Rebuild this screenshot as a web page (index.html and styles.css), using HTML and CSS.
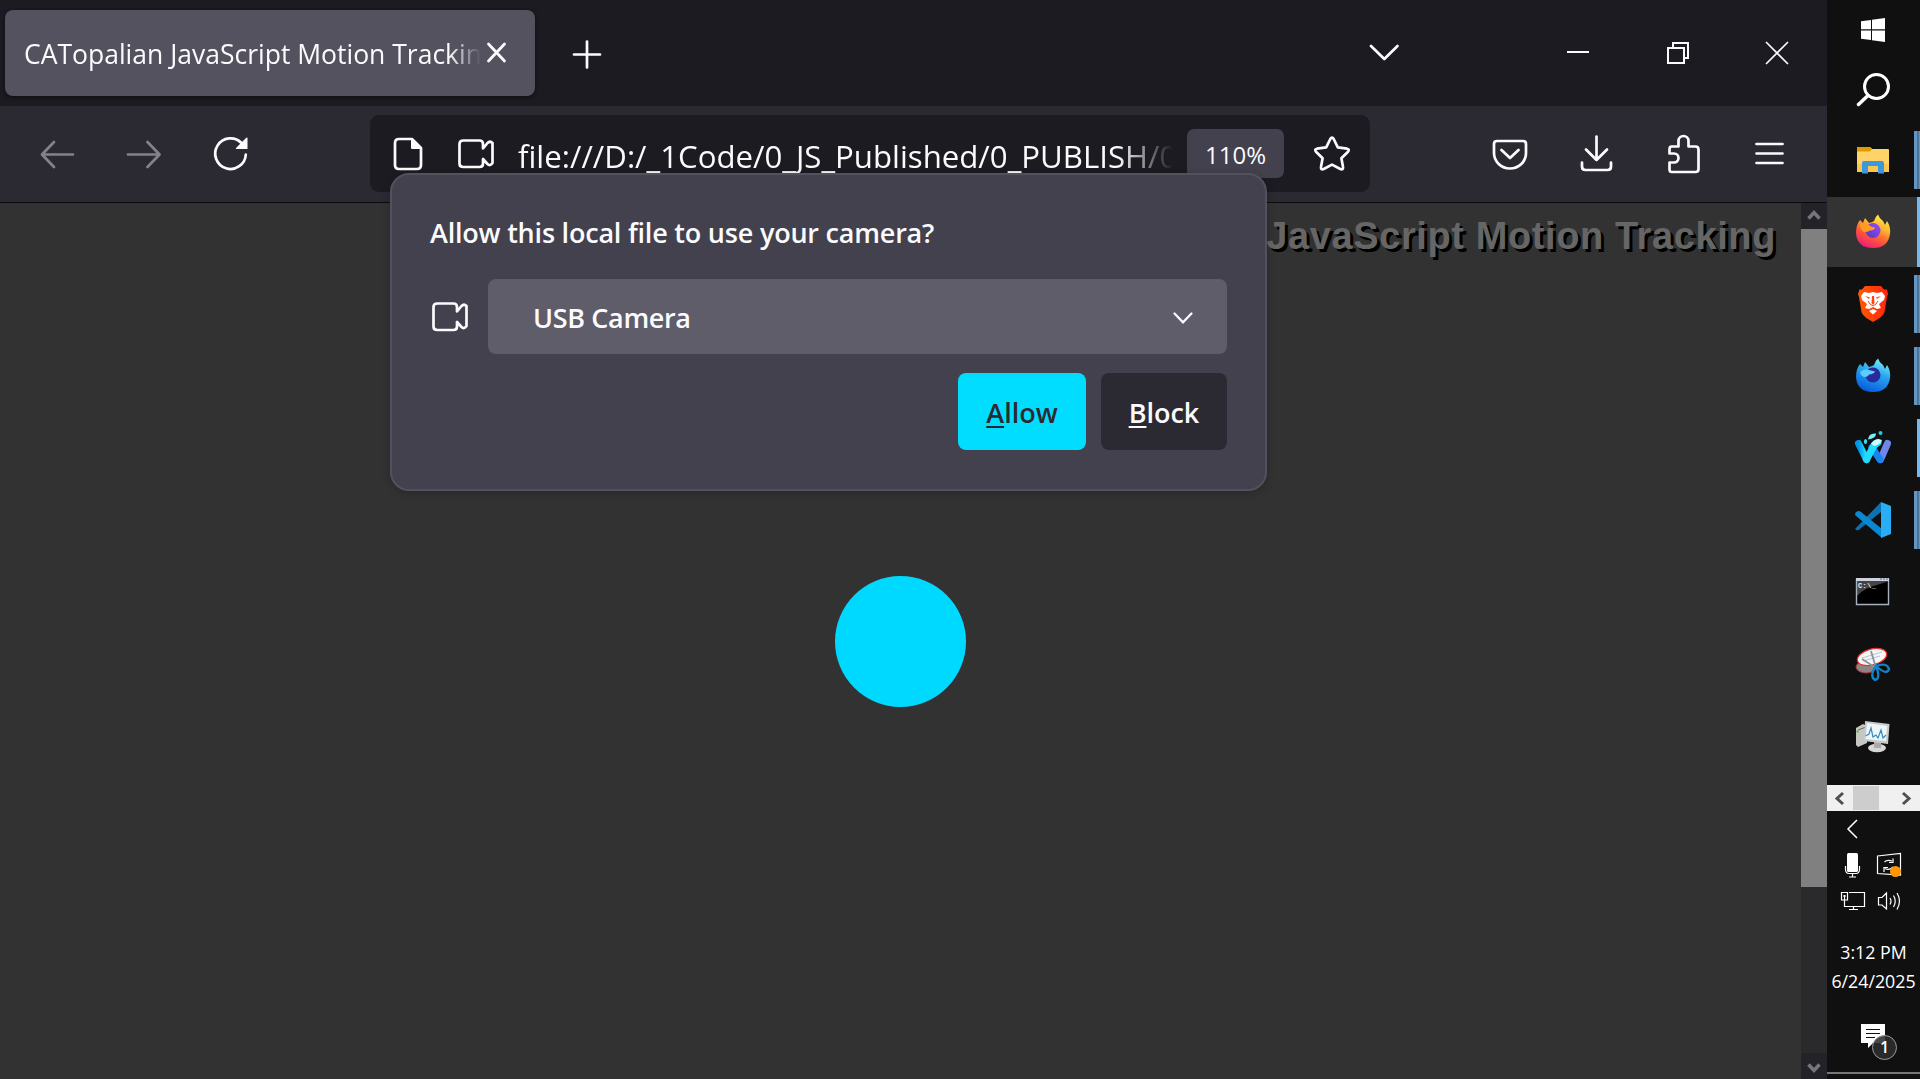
FILE: index.html
```html
<!DOCTYPE html>
<html lang="en">
<head>
<meta charset="utf-8">
<title>CATopalian JavaScript Motion Tracking</title>
<link rel="stylesheet" href="styles.css">
</head>
<body>
<div class="desktop">
  <main class="window">
    <header class="tabstrip">
      <div class="tab">
        <span class="tab-title">CATopalian JavaScript Motion Tracking</span>
        <svg class="tab-close" viewBox="0 0 24 24"><path d="M3.500 3 19.500 20M19.500 3 3.500 20" fill="none" stroke="#fbfbfe" stroke-width="2.800" stroke-linecap="round"/></svg>
      </div>
      <svg class="icon new-tab" viewBox="0 0 48 48"><path d="M11 25.500H37M24 12.500V38.500" class="line"/></svg>
      <svg class="icon all-tabs" viewBox="0 0 48 48"><path d="M11 17 24.300 30 37.500 17" class="line"/></svg>
      <div class="window-buttons">
        <svg class="icon" viewBox="0 0 48 48"><path d="M13 23H35" class="line square"/></svg>
        <svg class="icon" viewBox="0 0 48 48"><path d="M15 19H31V34H15ZM20 18V14H35V29H32" class="line square"/></svg>
        <svg class="icon" viewBox="0 0 48 48"><path d="M14.500 13.500 35.500 34.500M35.500 13.500 14.500 34.500" class="line thin"/></svg>
      </div>
    </header>
    <nav class="toolbar">
      <svg class="icon dim" viewBox="0 0 48 48"><path d="M40 24.500H9.500M21 12 9 24.500 21 37" class="line"/></svg>
      <svg class="icon dim" viewBox="0 0 48 48"><path d="M8 24.500H39M27.500 12 39.500 24.500 27.500 37" class="line"/></svg>
      <svg class="icon" viewBox="0 0 48 48"><path d="M38.800 24.500A15.300 15.300 0 1 1 34.500 13" class="line"/><path d="M40.500 8.500V19H30Q28 19 29.500 17.500L38.500 8.500Q40.500 6.500 40.500 8.500Z" fill="#fbfbfe"/></svg>
      <div class="urlbar">
        <svg class="icon" viewBox="0 0 48 48"><path d="M15 9H28L37 18V35Q37 39 33 39H15Q11 39 11 35V13Q11 9 15 9Z" class="line"/><path d="M27 8.500V18Q27 19 28 19H37.500Z" fill="#fbfbfe"/></svg>
        <svg class="icon" viewBox="0 0 48 48"><path d="M11.300 10.500H27.500Q31 10.500 31 14V18.500L35.500 13Q38 10.500 40.500 13V33Q38 36.500 35.500 34L31 29V33.500Q31 37 27.500 37H11.300Q7.500 37 7.500 33.500V14Q7.500 10.500 11.300 10.500Z" class="line"/></svg>
        <span class="url">file:///D:/_1Code/0_JS_Published/0_PUBLISH/0</span>
        <span class="zoom">110%</span>
        <svg class="icon" viewBox="0 0 48 48"><path d="M22.300 9Q24 6 25.700 9L29.800 17.300 39 18.700Q42 19.400 40 21.700L33.400 28.200 35 37Q35.300 40.300 32.300 39L24 34.600 15.700 39Q12.700 40.300 13 37L14.600 28.200 8 21.700Q6 19.400 9 18.700L18.200 17.300Z" class="line"/></svg>
      </div>
      <div class="tools">
        <svg class="icon" viewBox="0 0 48 48"><path d="M11 11H37Q40 11 40 14V23A16 15.500 0 0 1 8 23V14Q8 11 11 11ZM15.500 20 24 28 32.500 20" class="line"/></svg>
        <svg class="icon" viewBox="0 0 48 48"><path d="M23.500 6.500V30M13 19.500 23.500 30 34 19.500M9 32.500V36.500Q9 40 12.500 40H34.500Q38 40 38 36.500V32.500" class="line"/></svg>
        <svg class="icon" viewBox="0 0 48 48"><path d="M12.500 16.500H19.500V11A5 5 0 0 1 29.500 11V16.500H36.500Q39.500 16.500 39.500 19.500V39Q39.500 42 36.500 42H12.500Q10.500 42 10.500 39V32.500H15A4.500 4.500 0 0 0 15 23.500H10.500V19.500Q10.500 16.500 12.500 16.500Z" class="line"/></svg>
        <svg class="icon" viewBox="0 0 48 48"><path d="M10.500 14H36.500M10.500 23.500H36.500M10.500 33H36.500" class="line"/></svg>
      </div>
    </nav>
    <section class="viewport">
      <div class="page">
        <h1 class="page-title">JavaScript Motion Tracking</h1>
        <div class="ball"></div>
      </div>
      <div class="scrollbar">
        <svg viewBox="0 0 26 26"><path d="M7.500 15.500 13 9.500 18.500 15.500" fill="none" stroke="#77777a" stroke-width="3.500"/></svg>
        <div class="thumb"></div>
        <svg class="down" viewBox="0 0 26 26"><path d="M7.500 11.500 13 17.500 18.500 11.500" fill="none" stroke="#77777a" stroke-width="3.500"/></svg>
      </div>
    </section>
    <div class="popup">
      <p class="question">Allow this local file to use your camera?</p>
      <div class="device">
        <svg class="icon" viewBox="0 0 48 48"><path d="M11.300 10.500H27.500Q31 10.500 31 14V18.500L35.500 13Q38 10.500 40.500 13V33Q38 36.500 35.500 34L31 29V33.500Q31 37 27.500 37H11.300Q7.500 37 7.500 33.500V14Q7.500 10.500 11.300 10.500Z" class="line"/></svg>
        <div class="select"><span>USB Camera</span><svg viewBox="0 0 24 24"><path d="M3.500 8.500 12 17.300 20.500 8.500" fill="none" stroke="#fbfbfe" stroke-width="2.300" stroke-linecap="round"/></svg></div>
      </div>
      <div class="actions">
        <div class="button allow"><u>A</u>llow</div>
        <div class="button block"><u>B</u>lock</div>
      </div>
    </div>
  </main>

  <aside class="taskbar">
    <svg class="start" viewBox="0 0 93 60"><path d="M34 21.300 44 20V29.300H34ZM45 19.800 58 18V29.300H45ZM34 30.500H44V40L34 38.800ZM45 30.500H58V42L45 40.200Z" fill="#fff"/></svg>
    <svg class="search" viewBox="0 0 93 64"><circle cx="49.500" cy="26.500" r="12" fill="none" stroke="#fff" stroke-width="3"/><path d="M41 35.500 31.500 44.500" stroke="#fff" stroke-width="3.500" stroke-linecap="round"/></svg>
    <div class="task running multi">
      <svg viewBox="0 0 93 72"><path d="M30 24Q30 23 31 23H43L45 25H61Q62 25 62 26V48H30Z" fill="#ffd367"/><path d="M30 24Q30 23 31 23H43L45 25 43 27.500H30Z" fill="#e09b00"/><path d="M30 40H62V48H30Z" fill="#f9c74c"/><path d="M35 49.500V39Q35 37 37 37H55Q57 37 57 39V49.500H51V42H41V49.500Z" fill="#3c97df"/></svg>
    </div>
    <div class="task running active">
      <svg viewBox="0 0 93 72">
        <defs>
          <linearGradient id="fx" x1=".8" y1="0" x2=".3" y2="1"><stop offset="0" stop-color="#fff44f"/><stop offset=".35" stop-color="#ffb52e"/><stop offset=".65" stop-color="#ff5a36"/><stop offset="1" stop-color="#f0197a"/></linearGradient>
          <linearGradient id="fxc" x1="1" y1="0" x2="0" y2="1"><stop offset="0" stop-color="#a24bf5"/><stop offset="1" stop-color="#4a3bc0"/></linearGradient>
        </defs>
        <path d="M33 24 36 27 38 22 42 27Q46 26 47 25 48 21 51 18.500 52 22 56 25L58 29 60 25Q64 31 63 38 61 52 46 52 30 52 29 37 29 29 33 24Z" fill="url(#fx)"/>
        <circle cx="46" cy="34.500" r="7.500" fill="url(#fxc)"/>
        <path d="M33 29Q38 25 42 29 44 31 48 31.500 48 34 43 34.500 41 36 37 36 34 34 33 29Z" fill="#ff9b21"/>
      </svg>
    </div>
    <div class="task running multi">
      <svg viewBox="0 0 93 72">
        <defs><linearGradient id="br"><stop offset="0" stop-color="#ff5a00"/><stop offset="1" stop-color="#ff2410"/></linearGradient></defs>
        <path d="M38 18H54L57 21.500 60 21.500 61 26 60 29 57.500 44Q56 48 51 51L46 54 41 51Q36 48 34.500 44L32 29 31 26 32.500 21.500 35 21.500Z" fill="url(#br)"/>
        <path d="M37 24 42 25 46 24 50 25 55 24 58 28 57 32 52 36 54 40 50 41 46 39 42 41 38 40 40 36 35 32 34 28ZM46 41 50 43 46 46.500 42 43Z" fill="#fff"/>
        <path d="M38 28 43 29.500 42 31ZM54 28 49 29.500 50 31ZM45 28H47L47.500 35 46 37 44.500 35Z" fill="#ff4210"/><path d="M41 33 43 36 46 38 49 36 51 33" fill="none" stroke="#ff4210" stroke-width="1"/>
      </svg>
    </div>
    <div class="task running multi">
      <svg viewBox="0 0 93 72">
        <defs><linearGradient id="fd" x1=".7" y1="0" x2=".3" y2="1"><stop offset="0" stop-color="#7df0f8"/><stop offset=".4" stop-color="#2aa9ef"/><stop offset="1" stop-color="#0559dc"/></linearGradient></defs>
        <path d="M33 24 36 27 38 22 42 27Q46 26 47 25 48 21 51 18.500 52 22 56 25L58 29 60 25Q64 31 63 38 61 52 46 52 30 52 29 37 29 29 33 24Z" fill="url(#fd)"/>
        <circle cx="46" cy="35" r="7.500" fill="#2a2a9c"/>
        <path d="M33 32Q38 28 42 30 45 30.500 48 31.500 47 34 42 34.500 41 37 37 37 34 36 33 32Z" fill="#59ceff"/>
      </svg>
    </div>
    <div class="task running">
      <svg viewBox="0 0 93 72">
        <defs><linearGradient id="wf"><stop offset="0" stop-color="#0093e8"/><stop offset="1" stop-color="#25e8ff"/></linearGradient></defs>
        <g transform="translate(0 3.500)">
          <path d="M60.500 28 53.500 44" stroke="#6f86ea" stroke-width="7" stroke-linecap="round"/>
          <path d="M45 32 53 44" stroke="#1785ef" stroke-width="7" stroke-linecap="round"/>
          <path d="M31.500 28 39.500 44" stroke="url(#wf)" stroke-width="7" stroke-linecap="round"/>
          <path d="M39.500 44 47 30 51 27" fill="none" stroke="#20dcff" stroke-width="7" stroke-linecap="round" stroke-linejoin="round"/>
          <path d="M44 28Q48 22 55 24.500 54 29 47 30.500Z" fill="#caffff"/>
          <path d="M41 24Q42 17 49 18 49 23 41 24Z" fill="#73efff"/><circle cx="53.500" cy="17.500" r="2" fill="#27c8dc"/><ellipse cx="38.500" cy="26" rx="1.600" ry="2.600" fill="#35ddf5"/>
        </g>
      </svg>
    </div>
    <div class="task running multi">
      <svg viewBox="0 0 93 72"><path d="M28 45 54 18V28L34 44Q31 48 28 45Z" fill="#0872b4"/><path d="M28.500 28.500 31 27Q33 27 34 28L55 45V54L28 31Z" fill="#0b87d2"/><path d="M54 18 64 22V50L54 54Z" fill="#29adf4"/></svg>
    </div>
    <div class="task">
      <svg viewBox="0 0 93 72"><path d="M29 22H62V49H29Z" fill="#000"/><path d="M30 25H62L50 29Q37 32 30 40Z" fill="#454545"/><path d="M29.500 23.500H61.500V48.500H29.500Z" fill="none" stroke="#a8b0bc" stroke-width="1.400"/><path d="M29 22H62V25H29Z" fill="#ccd3df"/><path d="M53 23H55M56 23H58M59 23H61" stroke="#666a78"/><text x="31" y="32" font-family="Liberation Mono" font-size="7" fill="#eee" font-weight="700" textLength="18">C:\_</text></svg>
    </div>
    <div class="task">
      <svg viewBox="0 0 93 72"><ellipse cx="39" cy="39" rx="10" ry="6" fill="#8d8583" stroke="#a43b3b"/><ellipse cx="45" cy="29" rx="15" ry="8" transform="rotate(-15 45 29)" fill="#f4f6f8" stroke="#ed2d2d" stroke-width="1.300"/><path d="M35 30 55 24M36 33 53 28" stroke="#bcc3ca"/><path d="M44 23 49 40 35 31" fill="none" stroke="#8b939b" stroke-width="1.800"/><path d="M49 38Q42 48 48 52 54 51 49 38ZM49 38Q60 34 62 41 60 48 49 38Z" fill="none" stroke="#1282cb" stroke-width="2.300"/></svg>
    </div>
    <div class="task">
      <svg viewBox="0 0 93 72"><g transform="translate(0 1)"><path d="M29 27 36 23 40 25V42L31 46 29 44Z" fill="#c6c6c3"/><path d="M31 29 39 26" stroke="#666"/><circle cx="30.500" cy="30.500" r="1.200" fill="#52d416"/><ellipse cx="50" cy="47" rx="9" ry="4.200" fill="#d7d7d5"/><path d="M47 40H54V47H47Z" fill="#aaa"/><path d="M38 20 62.500 23 61 43 37 40Z" fill="#c9cbc9"/><path d="M40 22 60 25 59 40 38.500 38Z" fill="#edf6fb"/><path d="M38.500 35 42 33 44 27 46 36 49 34 51 37 54 29 56 37 59 34" fill="none" stroke="#3989bb" stroke-width="1.200"/></g></svg>
    </div>
    <div class="hscroll">
      <svg viewBox="0 0 26 26"><path d="M16 8 10 13.500 16 19" class="arrow"/></svg>
      <div class="hthumb"></div>
      <svg class="right" viewBox="0 0 26 26"><path d="M9 8 15 13.500 9 19" class="arrow"/></svg>
    </div>
    <svg class="tray" viewBox="0 0 93 110" fill="none" stroke="#fff" stroke-width="1.200">
      <path d="M30 9 21 18 30 27" stroke-width="1.500"/>
      <rect x="20" y="42" width="11" height="19" rx="1.500" fill="#fff" stroke="none"/><path d="M18.500 55V58Q18.500 62.500 22 62.500H29Q32.500 62.500 32.500 58V55M25.500 63V66M22 66H29"/>
      <path d="M50.500 45 73.500 42.500V64L50.500 62.500ZM57.500 51Q60 48.500 65 50M66 47.500V51.500H62M66 56Q62 60 58 57.500M57 61V56.500H61"/>
      <circle cx="68.500" cy="60.500" r="5.500" fill="#ff9600" stroke="none"/>
      <path d="M22 81.500H37.500V95.500H17.500V90M22 98.500H31M26.500 95.500V98.500M14.500 81.500H20.500V89H14.500ZM17.500 84V95M16 85H19"/>
      <path d="M51.500 86.500H55L59.500 82V98L55 94H51.500ZM63 87Q65 90 63 93.500M66.500 84.500Q70 90 66.500 96M70 82Q75 90 70 98.500"/>
    </svg>
    <div class="clock"><span class="time">3:12 PM</span><span class="date">6/24/2025</span></div>
    <div class="notifications">
      <svg viewBox="0 0 93 40"><path d="M34 6H58V25H46L41 30V25H34Z" fill="#fff"/><path d="M39 11.500H53M39 15.500H53M39 19.500H48" stroke="#101010" stroke-width="1.200"/></svg>
      <span class="count">1</span>
    </div>
    <div class="show-desktop"></div>
  </aside>
</div>
</body>
</html>
```
FILE: styles.css
```css
* { box-sizing: border-box; }
body {
  margin: 0;
  overflow: hidden;
  background: #101010;
  color: #fbfbfe;
  font-family: "Open Sans", "Noto Sans", sans-serif;
}
svg { display: block; flex: none; }
.desktop { display: flex; width: 1920px; height: 1079px; }
.window { position: relative; display: flex; flex-direction: column; width: 1827px; background: #323232; }

.icon { width: 48px; height: 48px; }
.line { fill: none; stroke: #fbfbfe; stroke-width: 2.7; stroke-linecap: round; stroke-linejoin: round; }
.line.square { stroke-width: 2; stroke-linecap: butt; stroke-linejoin: miter; }
.line.thin { stroke-width: 1.7; }
.dim { opacity: .42; }

/* Tabs */
.tabstrip { display: flex; align-items: center; height: 106px; padding-left: 5px; background: #1c1b22; }
.tab {
  display: flex; align-items: center;
  width: 530px; height: 86px; padding-left: 19px;
  border-radius: 8px; background: #53525e;
  box-shadow: 0 1px 4px rgba(0, 0, 0, .6);
}
.tab-title {
  width: 457px; padding-top: 2px; overflow: hidden; white-space: nowrap;
  font-size: 26.5px; line-height: 40px;
  mask-image: linear-gradient(to right, #000 425px, transparent 457px);
}
.tab-close { width: 24px; height: 24px; margin-left: 4px; }
.new-tab { margin-left: 28px; }
.all-tabs { margin-left: 749px; }
.window-buttons { display: flex; gap: 51px; margin-left: 146px; }

/* Navigation */
.toolbar {
  display: flex; align-items: center; gap: 39px;
  height: 97px; padding: 0 0 1px 33px; border-bottom: 1px solid #0c0c0d;
  background: #2b2a33;
}
.urlbar {
  display: flex; align-items: center;
  width: 1000px; height: 77px; margin-left: 76px; padding-left: 14px;
  border-radius: 9px; background: #1c1b22;
}
.urlbar .icon + .icon { margin-left: 20px; }
.url {
  width: 655px; margin-left: 18px; padding-top: 4px; overflow: hidden; white-space: nowrap;
  font-size: 31.2px; line-height: 46px;
  mask-image: linear-gradient(to right, #000 600px, transparent 655px);
}
.zoom {
  width: 97px; height: 49px; margin-left: 14px;
  border-radius: 7px; background: #42414d;
  font-size: 24px; line-height: 51px; text-align: center;
}
.zoom + .icon { margin-left: 24px; }
.tools { display: flex; gap: 38.5px; margin-left: 77px; }

/* Page */
.viewport { display: flex; flex: 1; }
.page { flex: 1; display: flex; flex-direction: column; background: #323232; }
.page-title {
  align-self: flex-end; margin: 8px 25px 0 0;
  font: bold 38px/50px "Liberation Sans", Arial, sans-serif;
  letter-spacing: .6px; white-space: nowrap;
  color: #666; text-shadow: 3px 3px #000;
}
.ball { width: 131px; height: 131px; margin: 315px 0 0 835px; border-radius: 50%; background: #00d9ff; }
.scrollbar { display: flex; flex-direction: column; width: 26px; background: #2a2a2d; }
.scrollbar svg { width: 26px; height: 26px; background: #232228; }
.thumb { height: 658px; background: #808080; }
.scrollbar .down { margin-top: auto; }

/* Permission prompt */
.popup {
  position: absolute; left: 390px; top: 173px;
  width: 877px; height: 318px; padding: 36px 38px 0;
  border: 2px solid #52525e; border-radius: 19px;
  background: #42414d; box-shadow: 0 2px 8px rgba(0, 0, 0, .2);
}
.question { margin: 0; font-size: 27px; font-weight: 600; letter-spacing: -.21px; line-height: 44px; white-space: nowrap; }
.device { display: flex; align-items: center; height: 75px; margin-top: 24px; }
.device .icon { margin-left: -4px; }
.select {
  display: flex; align-items: center; justify-content: space-between;
  width: 739px; height: 75px; margin-left: 14px; padding: 0 32px 0 45px;
  border-radius: 8px; background: #5f5d69;
  font-size: 27px; font-weight: 600; letter-spacing: -.35px;
}
.select span { padding-top: 2px; }
.select svg { width: 24px; height: 24px; }
.actions { display: flex; justify-content: flex-end; gap: 15px; margin-top: 19px; }
.button { width: 126px; height: 77px; border-radius: 8px; font-size: 27px; font-weight: 600; line-height: 79px; text-align: center; }
.button u { text-decoration-thickness: 2px; text-underline-offset: 3px; }
.allow { width: 128px; background: #00ddff; color: #2b2a33; }
.block { background: #2b2a33; }

/* Taskbar */
.taskbar { display: flex; flex-direction: column; width: 93px; background: #101010; color: #fff; }
.start { height: 60px; }
.search { height: 64px; }
.task { display: flex; align-items: center; height: 72px; position: relative; }
.task svg { width: 93px; height: 72px; }
.active { background: #333; background-clip: content-box; padding: 1px 0; }
.running::after { content: ""; position: absolute; right: 0; top: 7px; width: 3px; height: 58px; background: #76b9ed; }
.active::after { top: 1px; height: 70px; }
.multi::after { width: 6px; background: linear-gradient(to right, #6596c1 3px, #4b7396 3px 5px, #6596c1 5px); }
.hscroll { display: flex; height: 26px; margin-top: 13px; background: #f0f0f0; }
.hscroll svg { width: 26px; height: 26px; }
.hthumb { width: 26px; height: 24px; margin-top: 1px; background: #cdcdcd; }
.hscroll .right { margin-left: auto; }
.arrow { fill: none; stroke: #505050; stroke-width: 3; }
.tray { width: 93px; height: 110px; }
.clock { display: flex; flex-direction: column; align-items: center; margin-top: 17px; font-size: 17.8px; line-height: 29px; white-space: nowrap; }
.notifications { position: relative; height: 40px; margin-top: 22px; }
.count {
  position: absolute; left: 45px; top: 17px; width: 25px; height: 25px;
  border: 1px solid #999; border-radius: 50%; background: rgba(45, 45, 45, .88);
  font-size: 16px; font-weight: 600; line-height: 23px; text-align: center;
}
.show-desktop { height: 2px; margin-top: 14px; background: #777; }
```
